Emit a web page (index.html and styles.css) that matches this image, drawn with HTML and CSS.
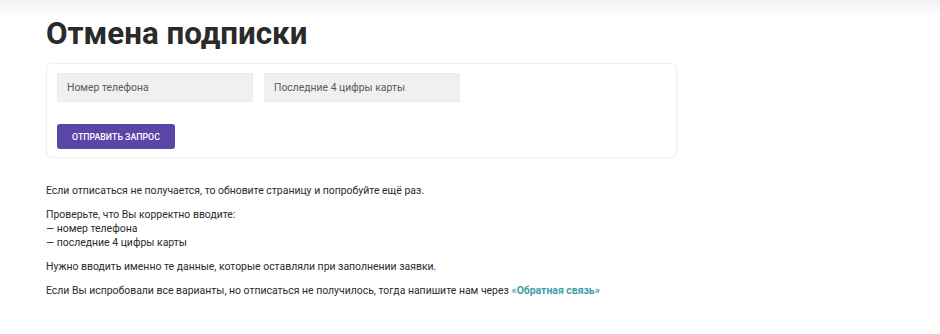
FILE: index.html
```html
<!DOCTYPE html>
<html lang="ru">
<head>
<meta charset="utf-8">
<title>Отмена подписки</title>
<link rel="stylesheet" href="styles.css">
</head>
<body>
<div class="topbar"></div>
<main class="page">
  <h1 class="title">Отмена подписки</h1>
  <form class="card">
    <div class="fields">
      <input class="field" type="text" placeholder="Номер телефона">
      <input class="field" type="text" placeholder="Последние 4 цифры карты">
    </div>
    <button class="btn" type="button">Отправить запрос</button>
  </form>
  <div class="info">
    <p>Если отписаться не получается, то обновите страницу и попробуйте ещё раз.</p>
    <p>Проверьте, что Вы корректно вводите:<br>— номер телефона<br>— последние 4 цифры карты</p>
    <p>Нужно вводить именно те данные, которые оставляли при заполнении заявки.</p>
    <p>Если Вы испробовали все варианты, но отписаться не получилось, тогда напишите нам через <a class="link" href="#">«Обратная связь»</a></p>
  </div>
</main>
</body>
</html>
```
FILE: styles.css
```css
html, body {
  margin: 0;
  padding: 0;
  background: #fff;
  font-family: Roboto, "Liberation Sans", Arial, sans-serif;
  color: #2b2b2b;
}
.topbar {
  height: 16px;
  background: linear-gradient(#f1f1f1, #ffffff);
}
.page {
  width: 631px;
  margin-left: 46px;
}
.title {
  margin: 0;
  font-size: 31.3px;
  line-height: 36px;
  font-weight: 700;
  color: #2a2a2a;
}
.card {
  margin-top: 11px;
  border: 1px solid #efefef;
  border-radius: 6px;
  box-shadow: 0 0 3px rgba(0,0,0,0.04);
  padding: 9px 10px 8px;
  display: flex;
  flex-direction: column;
  align-items: flex-start;
}
.fields {
  display: flex;
  gap: 11px;
}
.field {
  width: 196px;
  height: 29px;
  box-sizing: border-box;
  border: 1px solid #ececec;
  background: #f0f0f0;
  padding: 0 9px;
  font-family: inherit;
  font-size: 10.4px;
  color: #333;
  outline: none;
}
.field::placeholder {
  color: #5a5a5a;
}
.btn {
  margin-top: 22px;
  width: 118px;
  height: 25px;
  border: 0;
  border-radius: 3px;
  background: #5b45a7;
  color: #fff;
  font-family: inherit;
  font-size: 8.8px;
  font-weight: 500;
  text-transform: uppercase;
  padding: 0;
}
.info {
  margin-top: 26px;
  font-size: 10.45px;
  line-height: 14px;
  color: #2b2b2b;
}
.info p {
  margin: 0 0 10px;
}
.link {
  color: #3c9ea8;
  font-weight: 700;
  text-decoration: none;
}
```
